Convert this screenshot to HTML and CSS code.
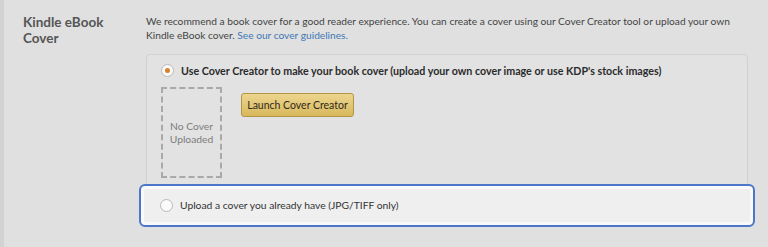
FILE: index.html
```html
<!DOCTYPE html>
<html lang="en">
<head>
  <meta charset="UTF-8">
  <meta name="viewport" content="width=device-width, initial-scale=1.0">
  <title>Kindle eBook Cover</title>

  <!-- Styles -->
  <link rel="stylesheet" href="styles.css">
</head>
<body>
  <div class="page">
    <section class="cover-section">
      <h2 class="section-title">Kindle eBook<br>Cover</h2>

      <div class="section-body">
        <p class="intro">
          <span class="intro-line">We recommend a book cover for a good reader experience. You can create a cover using our Cover Creator tool or upload your own</span>
          <span class="intro-line">Kindle eBook cover. <a href="#" class="link">See our cover guidelines.</a></span>
        </p>

        <div class="options">
          <!-- Cover Creator option -->
          <div class="option option-creator">
            <label class="option-row">
              <span class="radio checked"></span>
              <span class="option-label strong">Use Cover Creator to make your book cover (upload your own cover image or use KDP's stock images)</span>
            </label>
            <div class="creator-body">
              <div class="cover-placeholder">No Cover<br>Uploaded</div>
              <button type="button" class="btn-launch">Launch Cover Creator</button>
            </div>
          </div>

          <!-- Upload option -->
          <div class="option option-upload">
            <label class="option-row">
              <span class="radio"></span>
              <span class="option-label">Upload a cover you already have (JPG/TIFF only)</span>
            </label>
          </div>
        </div>
      </div>
    </section>
  </div>
</body>
</html>
```

FILE: styles.css
```css
* {
  box-sizing: border-box;
  margin: 0;
  padding: 0;
  font-family: 'Lato', 'Liberation Sans', sans-serif;
}

body {
  background: #e0e0e0;
  color: #3a3a3a;
  min-height: 100vh;
}

.page {
  min-height: 100vh;
  border-left: 4px solid #d3d3d3;
  padding: 14px 0 0 19px;
}

.cover-section {
  display: flex;
}

.section-title {
  width: 123px;
  flex-shrink: 0;
  font-size: 13.5px;
  line-height: 16px;
  font-weight: bold;
  color: #555;
}

.section-body {
  width: 602px;
}

.intro {
  font-size: 10.2px;
  line-height: 14px;
  color: #444;
}

.intro-line {
  display: block;
  white-space: nowrap;
}

.link {
  color: #3f78b5;
  text-decoration: none;
}

/* Options box */
.options {
  margin-top: 12px;
  border: 1px solid #d1d1d1;
  border-radius: 4px;
  background: #e2e2e2;
}

.option-creator {
  padding: 9px 14px 6px;
}

.option-row {
  display: flex;
  align-items: center;
  gap: 7px;
  font-size: 10.3px;
  line-height: 13px;
}

.option-label {
  color: #333;
}

.option-label.strong {
  font-size: 10.7px;
  font-weight: bold;
  color: #2b2b2b;
}

.radio {
  width: 13px;
  height: 13px;
  border-radius: 50%;
  border: 1px solid #b9b9b9;
  background: #fafafa;
  flex-shrink: 0;
  display: flex;
  align-items: center;
  justify-content: center;
}

.radio.checked::after {
  content: '';
  width: 5px;
  height: 5px;
  border-radius: 50%;
  background: #d9822b;
}

.creator-body {
  display: flex;
  align-items: flex-start;
  gap: 19px;
  margin-top: 10px;
}

.cover-placeholder {
  width: 61px;
  height: 91px;
  border: 2px dashed #a9a9a9;
  display: flex;
  align-items: center;
  justify-content: center;
  text-align: center;
  font-size: 10.3px;
  line-height: 12.5px;
  color: #7c7c7c;
}

.btn-launch {
  margin-top: 6px;
  width: 113px;
  height: 24px;
  border: 1px solid #b39643;
  border-radius: 3px;
  background: linear-gradient(#ecd58f, #d8b85c);
  font-size: 10.5px;
  color: #2f2a1c;
  cursor: pointer;
}

.option-upload {
  margin: 0 -8px -1px;
  padding: 13px 19px;
  border: 2px solid #4c76c9;
  border-radius: 6px;
  background: #efefef;
  box-shadow: inset 0 0 0 3px #f9f9f9;
}
```
